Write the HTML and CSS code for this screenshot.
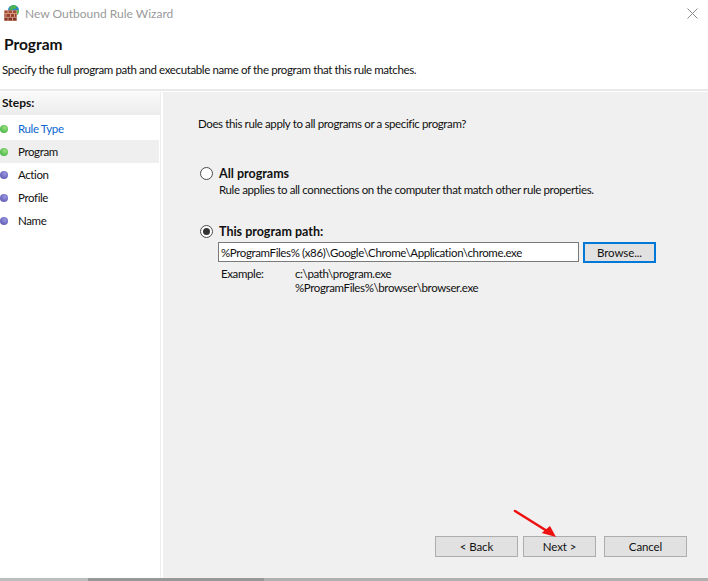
FILE: index.html
```html
<!DOCTYPE html>
<html lang="en">
<head>
<meta charset="utf-8">
<title>New Outbound Rule Wizard</title>
<link rel="stylesheet" href="styles.css">
</head>
<body>
<div class="window">
  <header class="head">
    <div class="titlebar">
      <svg class="appicon" width="16" height="16" viewBox="0 0 16 16">
        <circle cx="9.500" cy="5.500" r="5.500" fill="#2f86c9"/>
        <path d="M6 2c1.500-2 5-2.500 7-.5L11.500 4 9 3.500 8 5.500 5.500 4.500z" fill="#4fb548"/>
        <path d="M11 6l3.500-1.500c.8 2 .2 4-1 5.500l-2.500-1z" fill="#5fbb4c"/>
        <rect x="0" y="5.500" width="13" height="10.500" fill="#e0b8a4"/>
        <rect x="0.500" y="5.500" width="12" height="2.800" fill="#a84a30"/>
        <rect x="0.500" y="9" width="12" height="2.900" fill="#9a3f29"/>
        <rect x="0.500" y="12.600" width="12" height="3" fill="#853322"/>
        <path d="M4 5.500v2.800M8.500 5.500v2.800M2 9v2.900M6.500 9v2.900M10.500 9v2.900M4 12.600v3M8.500 12.600v3" stroke="#e0b8a4" stroke-width=".8"/>
      </svg>
      <span class="title">New Outbound Rule Wizard</span>
      <svg class="close" width="11" height="11" viewBox="0 0 11 11">
        <path d="M.5.5l10 10M10.500.5l-10 10" stroke="#8a8a8a" stroke-width="1" fill="none"/>
      </svg>
    </div>
    <h1 class="pagename">Program</h1>
    <p class="pagedesc">Specify the full program path and executable name of the program that this rule matches.</p>
  </header>
  <div class="main">
    <nav class="steps">
      <div class="stepshead">Steps:</div>
      <ul class="steplist">
        <li class="step done link"><span class="dot"></span>Rule Type</li>
        <li class="step done current"><span class="dot"></span>Program</li>
        <li class="step"><span class="dot"></span>Action</li>
        <li class="step"><span class="dot"></span>Profile</li>
        <li class="step"><span class="dot"></span>Name</li>
      </ul>
    </nav>
    <section class="content">
      <p class="question">Does this rule apply to all programs or a specific program?</p>
      <div class="option first">
        <span class="radio"></span>
        <div class="optiontext">
          <div class="optionname">All programs</div>
          <div class="optiondesc">Rule applies to all connections on the computer that match other rule properties.</div>
        </div>
      </div>
      <div class="option second">
        <span class="radio checked"></span>
        <div class="optionname">This program path:</div>
      </div>
      <div class="pathrow">
        <div class="pathinput">%ProgramFiles% (x86)\Google\Chrome\Application\chrome.exe</div>
        <button class="btn browse" type="button">Browse...</button>
      </div>
      <div class="example">
        <div class="examplelabel">Example:</div>
        <div>c:\path\program.exe<br>%ProgramFiles%\browser\browser.exe</div>
      </div>
      <div class="actions">
        <button class="btn back" type="button">&lt; Back</button>
        <button class="btn next" type="button">Next &gt;</button>
        <button class="btn cancel" type="button">Cancel</button>
      </div>
      <svg class="arrow" width="50" height="44" viewBox="0 0 50 44">
        <path d="M2 2L34 22" stroke="#ee1111" stroke-width="2.600" stroke-linecap="round" fill="none"/>
        <path d="M43 28L28.700 24L37 17z" fill="#ee1111"/>
      </svg>
    </section>
  </div>
  <div class="strip">
    <span class="stripa"></span><span class="stripb"></span><span class="stripc"></span>
  </div>
</div>
</body>
</html>
```
FILE: styles.css
```css
* { box-sizing: border-box; }
html, body { margin: 0; padding: 0; }
body {
  width: 708px;
  height: 581px;
  overflow: hidden;
  background: #fff;
  font-family: Lato, "Liberation Sans", Arial, sans-serif;
  font-size: 11.500px;
  letter-spacing: -0.380px;
  color: #111;
}
.window { display: flex; flex-direction: column; height: 581px; }
.head { height: 91px; flex: none; border-bottom: 2px solid #e9e9e9; }
.titlebar { display: flex; align-items: center; height: 28px; }
.appicon { margin-left: 4px; flex: none; margin-top: -3px; }
.title { margin: -2px 0 0 5px; color: #9a9a9a; font-size: 12px; letter-spacing: 0; }
.close { margin-left: auto; margin-right: 10px; margin-top: -1px; }
.pagename { margin: 8px 0 0 4px; font-size: 15.500px; letter-spacing: 0; line-height: 16px; font-weight: bold; color: #111; }
.pagedesc { margin: 10px 0 0 2px; line-height: 15px; }
.main { flex: 1; display: flex; min-height: 0; margin-top: 1px; }
.steps { width: 161px; margin-right: 2px; flex: none; border-right: 1px solid #eeeeee; }
.stepshead {
  height: 23px;
  padding: 3px 0 0 2px;
  font-weight: bold;
  font-size: 12px;
  letter-spacing: 0;
  background: linear-gradient(#fafafa, #ececec);
}
.steplist { list-style: none; margin: 2px 0 0; padding: 0; }
.step { display: flex; align-items: center; height: 23px; }
.dot {
  width: 8px;
  height: 8px;
  margin: 1px 10px 0 0;
  border-radius: 50%;
  background: radial-gradient(circle at 60% 35%, #9a97e0, #4e49a8);
}
.done .dot { background: radial-gradient(circle at 60% 35%, #9be084, #2ea832); }
.link { color: #0b66d0; }
.current { background: #efefef; margin-right: 1px; }
.content { flex: 1; display: flex; flex-direction: column; position: relative; background: #f0f0f0; padding: 24px 0 21px 35px; }
.question { margin: 0; line-height: 15px; }
.option { display: flex; align-items: flex-start; }
.first { margin-top: 35px; margin-left: 2px; }
.second { margin-top: 27px; margin-left: 2px; }
.radio {
  width: 13px;
  height: 13px;
  flex: none;
  margin: 1px 6px 0 0;
  border: 1px solid #4a4a4a;
  border-radius: 50%;
  background: #fff;
  display: flex;
  align-items: center;
  justify-content: center;
}
.checked::after {
  content: "";
  width: 7px;
  height: 7px;
  border-radius: 50%;
  background: #333;
}
.optionname { font-weight: bold; font-size: 12.500px; letter-spacing: 0; line-height: 15px; }
.optiondesc { line-height: 15px; margin-top: 1px; }
.pathrow { display: flex; margin: 3px 0 0 20px; gap: 4px; }
.pathinput {
  width: 361px;
  height: 20px;
  padding: 2px 2px;
  background: #fff;
  border: 1px solid #7a7a7a;
  line-height: 15px;
  white-space: nowrap;
  overflow: hidden;
}
.btn {
  font: inherit;
  letter-spacing: -0.100px;
  color: #111;
  height: 21px;
  padding: 0;
  background: #e1e1e1;
  border: 1px solid #adadad;
}
.browse { width: 73px; border: 2px solid #0078d7; }
.example { display: flex; margin: 4px 0 0 23px; line-height: 14px; }
.examplelabel { width: 74px; }
.actions { display: flex; margin: auto 0 0 237px; }
.next { width: 73px; margin-left: 5px; }
.back { width: 83px; }
.cancel { width: 83px; margin-left: 8px; }
.arrow { position: absolute; left: 350px; top: 417px; }
.strip { height: 3px; flex: none; display: flex; }
.stripa { width: 88px; background: #bdbdbd; }
.stripb { width: 176px; background: #989898; }
.stripc { flex: 1; background: #b0b0b0; }
```
